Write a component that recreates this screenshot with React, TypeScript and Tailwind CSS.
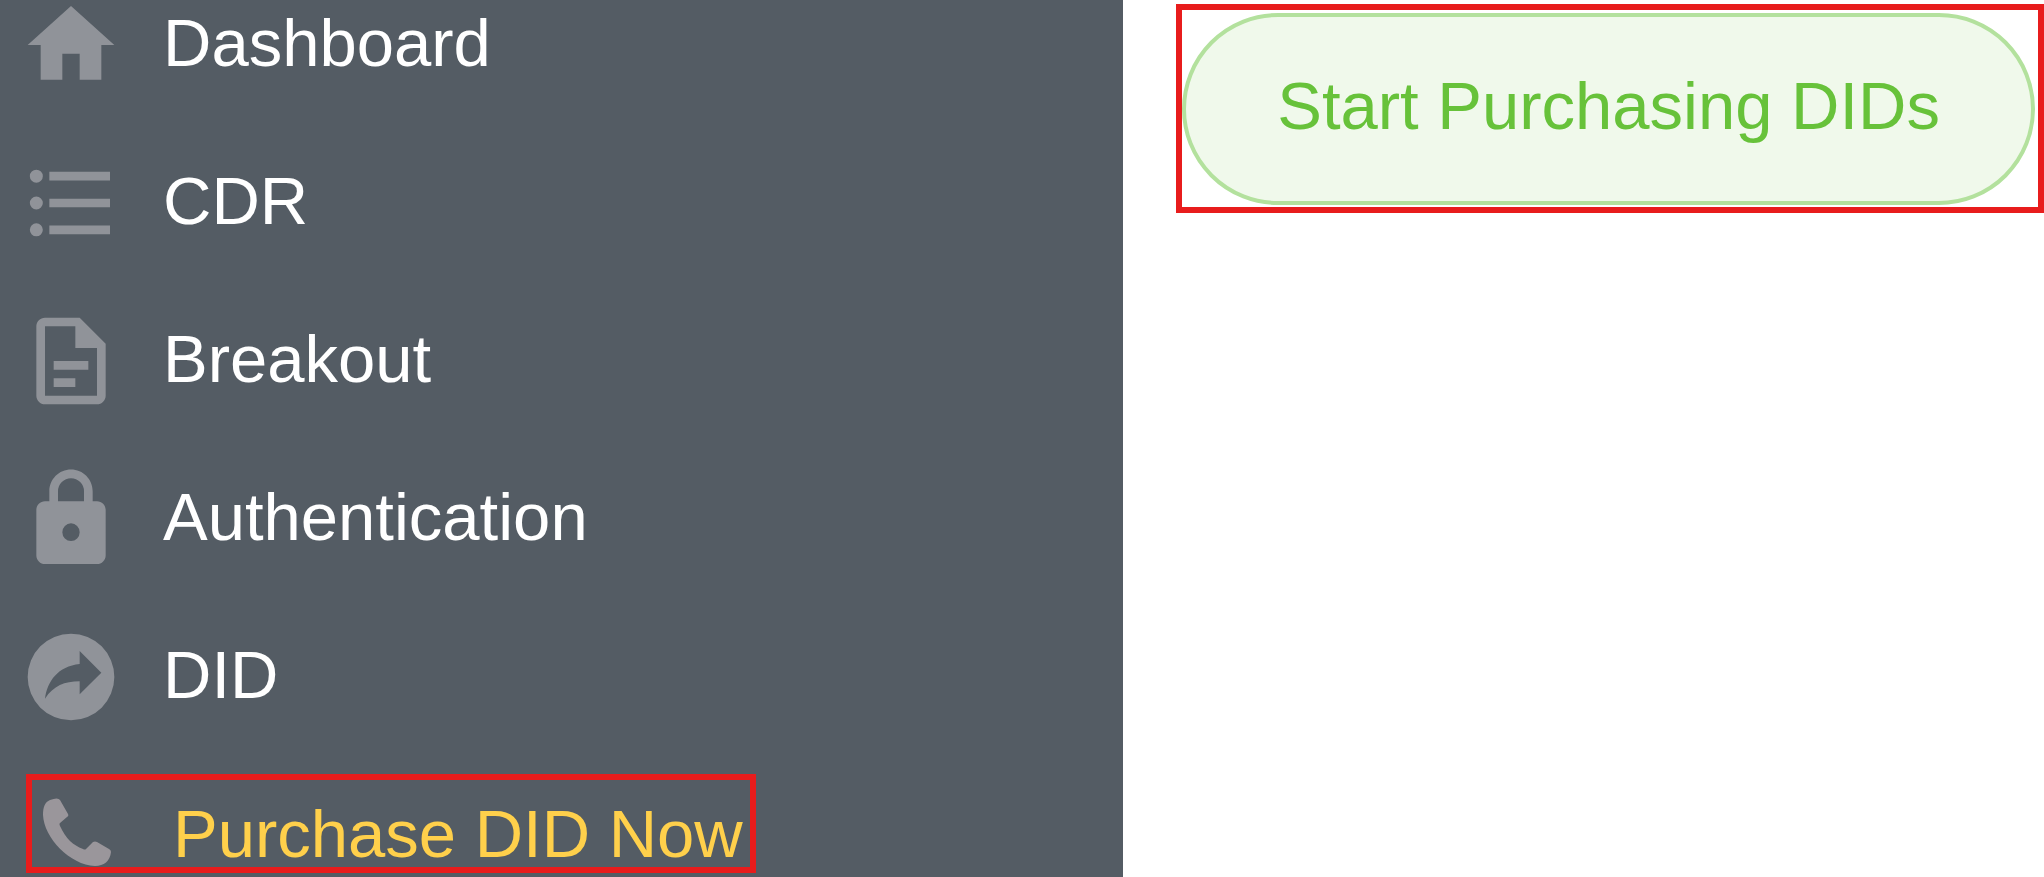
import type { ReactNode } from "react";

type Item = { label: string; icon: ReactNode };

const Icon = ({ children }: { children: ReactNode }) => (
  <svg viewBox="0 0 24 24" fill="currentColor" aria-hidden="true" className="size-[104px] shrink-0 text-[#909399]">
    {children}
  </svg>
);

const items: Item[] = [
  { label: "Dashboard", icon: <path d="M10 20v-6h4v6h5v-8h3L12 3 2 12h3v8z" /> },
  {
    label: "CDR",
    icon: (
      <path d="M4 10.5a1.5 1.5 0 1 0 0 3 1.5 1.5 0 0 0 0-3zm0-6.2a1.5 1.5 0 1 0 0 3 1.5 1.5 0 0 0 0-3zm0 12.4a1.5 1.5 0 1 0 0 3 1.5 1.5 0 0 0 0-3zM7 19.2h14v-2H7zM7 13h14v-2H7zM7 4.8v2h14v-2z" />
    ),
  },
  {
    label: "Breakout",
    icon: (
      <path
        fillRule="evenodd"
        d="M14 2H6c-1.1 0-2 .9-2 2v16c0 1.1.9 2 2 2h12c1.1 0 2-.9 2-2V8zM6 4h7v5h5v11H6zM8 12h8v2H8zM8 16h5v2H8z"
      />
    ),
  },
  {
    label: "Authentication",
    icon: (
      <path
        fillRule="evenodd"
        d="M18 7.900h-1V5.600c0-2.760-2.240-5-5-5S7 2.840 7 5.600v2.300H6c-1.100 0-2 .9-2 2v10.500c0 1.100.9 2 2 2h12c1.100 0 2-.9 2-2V9.900c0-1.100-.9-2-2-2zM12 17.100a2 2.050 0 1 1 0-4.100 2 2.050 0 0 1 0 4.100zM15 7.900H9V5.600a3 3 0 0 1 6 0z"
      />
    ),
  },
  {
    label: "DID",
    icon: (
      <path fillRule="evenodd" d="M12 2a10 10 0 1 0 0 20 10 10 0 0 0 0-20zM14 6l5 5-5 5v-3c-3.500 0-6 1-8 4 .5-4 3-7.500 8-8z" />
    ),
  },
];

export default function App() {
  return (
    <div className="flex min-h-screen bg-white font-['Liberation_Sans',Arial,sans-serif] text-[67px] leading-[76px]">
      <nav className="flex-1 overflow-hidden bg-[#545c64] pl-[19px] text-white">
        <ul className="-mt-[7px] flex flex-col">
          {items.map(({ label, icon }) => (
            <li key={label} className="h-[158px]">
              <a href="#" className="flex items-center gap-10">
                <Icon>{icon}</Icon>
                <span className="pb-1">{label}</span>
              </a>
            </li>
          ))}
          <li className="-mt-[9px] pl-[7px]">
            <a
              href="#"
              className="flex h-[99px] w-[730px] items-center gap-[62px] border-[6px] border-[#e81c1c] pl-[11px] pt-4 text-[#ffd04b]"
            >
              <svg viewBox="0 0 68 68" fill="currentColor" aria-hidden="true" className="size-[68px] shrink-0 text-[#9a969b]">
                <path d="M7 2Q15-1 17 2L25 16Q26 18 24 19L17 25Q16 26 17 28C23 41 30 47 40 51Q42 52 43 51L50 44Q52 43 54 44L66 51Q68 52 68 54C67 63 61 68 52 68C27 67 1 40 0 17C0 9 2 4 7 2z" />
              </svg>
              <span className="whitespace-nowrap pt-1">Purchase DID Now</span>
            </a>
          </li>
        </ul>
      </nav>
      <main className="pl-[53px] pt-1">
        <div className="border-[6px] border-[#e81c1c] pt-[3px] pr-[3px] pb-[2px]">
          <button
            type="button"
            className="h-[192px] whitespace-nowrap rounded-full border-4 border-[#b3e19d] bg-[#f0f9eb] px-[91px] pb-1.5 text-[#67c23a]"
          >
            Start Purchasing DIDs
          </button>
        </div>
      </main>
    </div>
  );
}
